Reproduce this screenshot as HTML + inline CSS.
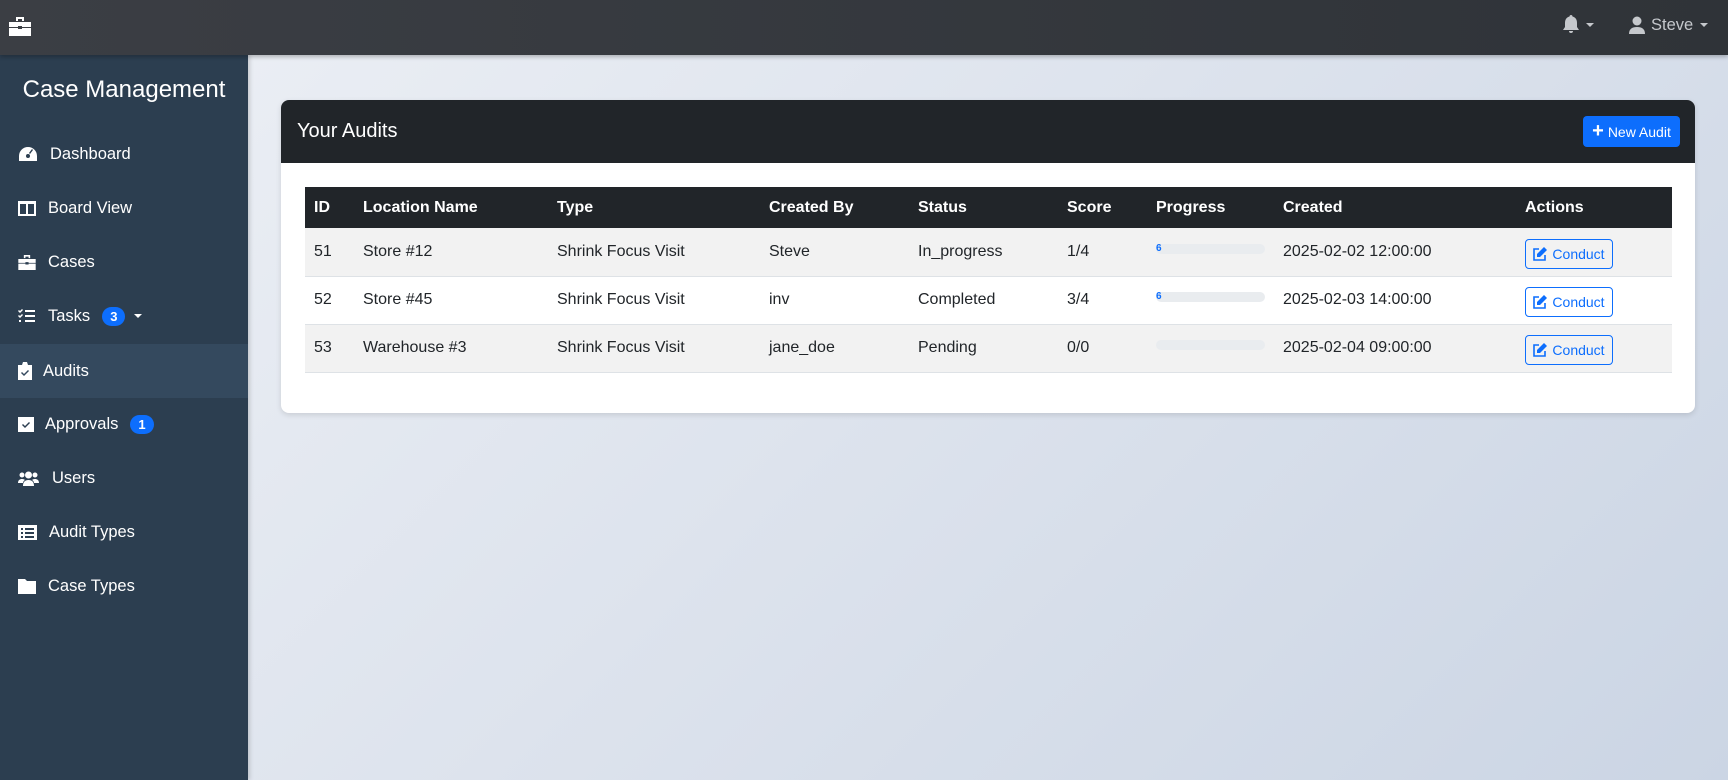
<!DOCTYPE html>
<html><head><meta charset="utf-8"><style>
*{box-sizing:border-box;margin:0;padding:0}
body{width:1728px;height:780px;overflow:hidden;font-family:"Liberation Sans",Arial,sans-serif;background:linear-gradient(135deg,#eef1f6 0%,#dde3ed 50%,#cbd5e4 100%);position:relative}
.top{position:absolute;left:0;top:0;width:1728px;height:55px;background:linear-gradient(90deg,#3b3e44,#2f3338);box-shadow:0 2px 4px rgba(0,0,0,.25);z-index:2}
.side{position:absolute;left:0;top:55px;width:248px;height:725px;background:#2c3e50;box-shadow:2px 0 4px rgba(0,0,0,.15)}
.side h1{font-weight:400;color:#fff;font-size:24px;text-align:center;margin-top:21px}
.nav{position:absolute;left:0;width:248px;height:54px;color:#fff;font-size:16.5px;display:flex;align-items:center}
.nav svg{position:absolute;left:18px;fill:#fff}
.nav.act{background:#34495e}
.badge{display:inline-block;background:#0d6efd;color:#fff;font-weight:700;font-size:13px;border-radius:10px;padding:2px 8px;margin-left:12px}
.card{position:absolute;left:281px;top:100px;width:1414px;height:313px;background:#fff;border-radius:8px;box-shadow:0 2px 6px rgba(0,0,0,.12);overflow:hidden}
.ch{height:63px;background:#212529;color:#fff;font-size:20px;padding:0 0 0 16px;display:flex;align-items:center;position:relative}
.btn{position:absolute;right:15px;top:16px;width:97px;height:31px;background:#0d6efd;color:#fff;font-size:14px;border-radius:4px;display:flex;align-items:center;justify-content:center}
table{position:absolute;left:24px;top:87px;width:1367px;border-collapse:collapse;font-size:16px;color:#212529}
th{background:#212529;color:#fff;text-align:left;height:41px;font-weight:700;padding:0}
td{height:48px;border-bottom:1px solid #dee2e6;padding:0;vertical-align:middle}
tr.s td{background:#f2f2f2}
.pb{width:109px;height:10px;background:#e9ecef;border-radius:5px;position:relative;top:-3px}
.pb span{position:absolute;left:0;top:-1px;font-size:10px;line-height:12px;color:#0d6efd;font-weight:700}
.cb{display:inline-flex;align-items:center;gap:5px;border:1px solid #0d6efd;color:#0d6efd;border-radius:4px;height:30px;width:88px;justify-content:center;font-size:14px;position:relative;top:2px}
</style></head><body>
<div class="top">
<svg style="position:absolute;left:9px;top:17px" width="22" height="19" viewBox="0 0 22 19"><path fill="#fff" d="M7 0h8v4h-2V2H9v2H7zM0 5h22v5H13v-1H9v1H0zM0 11h9v1h4v-1h9v8H0z"/></svg>
<svg style="position:absolute;left:1562px;top:15px" width="18" height="20" viewBox="0 0 18 20"><path fill="#c5c8cc" d="M9 0c1 0 1.5.7 1.5 1.5C13.5 2.2 15 4.5 15 8v4l2 3H1l2-3V8c0-3.5 1.5-5.8 4.5-6.5C7.5.7 8 0 9 0zM7 16h4a2 2 0 01-4 0z"/></svg>
<svg style="position:absolute;left:1586px;top:23px" width="8" height="5"><path fill="#c5c8cc" d="M0 0h8L4 4z"/></svg>
<svg style="position:absolute;left:1629px;top:16px" width="16" height="18" viewBox="0 0 16 18"><circle cx="8" cy="5" r="4.5" fill="#c5c8cc"/><path fill="#c5c8cc" d="M0 18c0-5 3-7 8-7s8 2 8 7z"/></svg>
<span style="position:absolute;left:1651px;top:16px;color:#c5c8cc;font-size:16.5px">Steve</span>
<svg style="position:absolute;left:1700px;top:23px" width="8" height="5"><path fill="#c5c8cc" d="M0 0h8L4 4z"/></svg>
</div>
<div class="side"><h1>Case Management</h1></div>
<div class="nav" style="top:127px"><svg width="20" height="16" viewBox="0 0 20 16"><path d="M10 1A9 9 0 001 10v5h18v-5a9 9 0 00-9-9zm0 7a2 2 0 110 4 2 2 0 010-4zm1-1l3-4 1 1-3 4z"/></svg><span style="margin-left:50px">Dashboard</span></div>
<div class="nav" style="top:181px"><svg width="18" height="15" viewBox="0 0 18 15"><path d="M0 0h18v15H0zM2 3v10h6V3zm8 0v10h6V3z" fill-rule="evenodd"/></svg><span style="margin-left:48px">Board View</span></div>
<div class="nav" style="top:235px"><svg width="18" height="15" viewBox="0 0 22 19"><path d="M7 0h8v4h-2V2H9v2H7zM0 5h22v5H13v-1H9v1H0zM0 11h9v1h4v-1h9v8H0z"/></svg><span style="margin-left:48px">Cases</span></div>
<div class="nav" style="top:289px"><svg width="17" height="14" viewBox="0 0 17 14"><path d="M0 2l1-1 1 1 2-2 1 1-3 3zM0 7l1-1 1 1 2-2 1 1-3 3zM1 11h2v2H1zM7 1h10v2H7zM7 6h10v2H7zM7 11h10v2H7z"/></svg><span style="margin-left:48px">Tasks</span><span class="badge">3</span><svg style="position:static;margin-left:9px" width="8" height="5"><path fill="#fff" d="M0 0h8L4 4z"/></svg></div>
<div class="nav act" style="top:344px"><svg width="14" height="18" viewBox="0 0 14 18"><path d="M0 3h4l1-3h4l1 3h4v15H0zm3 8l1-1 2 2 4-4 1 1-5 5z" fill-rule="evenodd"/></svg><span style="margin-left:43px">Audits</span></div>
<div class="nav" style="top:397px"><svg width="16" height="15" viewBox="0 0 16 15"><path d="M0 0h16v15H0zm4 8l1-1 2 2 4-4 1 1-5 5z" fill-rule="evenodd"/></svg><span style="margin-left:45px">Approvals</span><span class="badge">1</span></div>
<div class="nav" style="top:451px"><svg width="21" height="15" viewBox="0 0 21 15"><circle cx="4" cy="4" r="2.5"/><circle cx="17" cy="4" r="2.5"/><circle cx="10.5" cy="4" r="3.5"/><path d="M0 12c0-3 2-4 4-4s3 1 3 1-2 1-2 3zM21 12c0-3-2-4-4-4s-3 1-3 1 2 1 2 3zM5 15c0-4 2-6 5.5-6S16 11 16 15z"/></svg><span style="margin-left:52px">Users</span></div>
<div class="nav" style="top:505px"><svg width="19" height="15" viewBox="0 0 19 15"><path d="M0 0h19v15H0zm3 3v2h2V3zm4 0v2h9V3zM3 7v2h2V7zm4 0v2h9V7zm-4 4v2h2v-2zm4 0v2h9v-2z" fill-rule="evenodd"/></svg><span style="margin-left:49px">Audit Types</span></div>
<div class="nav" style="top:559px"><svg width="18" height="15" viewBox="0 0 18 15"><path d="M0 0h7l2 2h9v13H0z"/></svg><span style="margin-left:48px">Case Types</span></div>

<div class="card">
<div class="ch">Your Audits<div class="btn"><span style="font-size:20px;margin-right:4px;font-weight:700">+</span>New Audit</div></div>
<table>
<tr><th style="width:58px;padding-left:9px">ID</th><th style="width:194px">Location Name</th><th style="width:212px">Type</th><th style="width:149px">Created By</th><th style="width:149px">Status</th><th style="width:89px">Score</th><th style="width:127px">Progress</th><th style="width:242px">Created</th><th>Actions</th></tr>
<tr class="s"><td style="padding-left:9px">51</td><td>Store #12</td><td>Shrink Focus Visit</td><td>Steve</td><td>In_progress</td><td>1/4</td><td><div class="pb"><span>6</span></div></td><td>2025-02-02 12:00:00</td><td><span class="cb"><svg width="14" height="14" viewBox="0 0 14 14"><path fill="none" stroke="#0d6efd" stroke-width="1.6" d="M6 2H1v11h11V8"/><path fill="#0d6efd" d="M11 0l3 3-7 7H4V7z"/></svg>Conduct</span></td></tr>
<tr><td style="padding-left:9px">52</td><td>Store #45</td><td>Shrink Focus Visit</td><td>inv</td><td>Completed</td><td>3/4</td><td><div class="pb"><span>6</span></div></td><td>2025-02-03 14:00:00</td><td><span class="cb"><svg width="14" height="14" viewBox="0 0 14 14"><path fill="none" stroke="#0d6efd" stroke-width="1.6" d="M6 2H1v11h11V8"/><path fill="#0d6efd" d="M11 0l3 3-7 7H4V7z"/></svg>Conduct</span></td></tr>
<tr class="s"><td style="padding-left:9px">53</td><td>Warehouse #3</td><td>Shrink Focus Visit</td><td>jane_doe</td><td>Pending</td><td>0/0</td><td><div class="pb"></div></td><td>2025-02-04 09:00:00</td><td><span class="cb"><svg width="14" height="14" viewBox="0 0 14 14"><path fill="none" stroke="#0d6efd" stroke-width="1.6" d="M6 2H1v11h11V8"/><path fill="#0d6efd" d="M11 0l3 3-7 7H4V7z"/></svg>Conduct</span></td></tr>
</table>
</div>
</body></html>
